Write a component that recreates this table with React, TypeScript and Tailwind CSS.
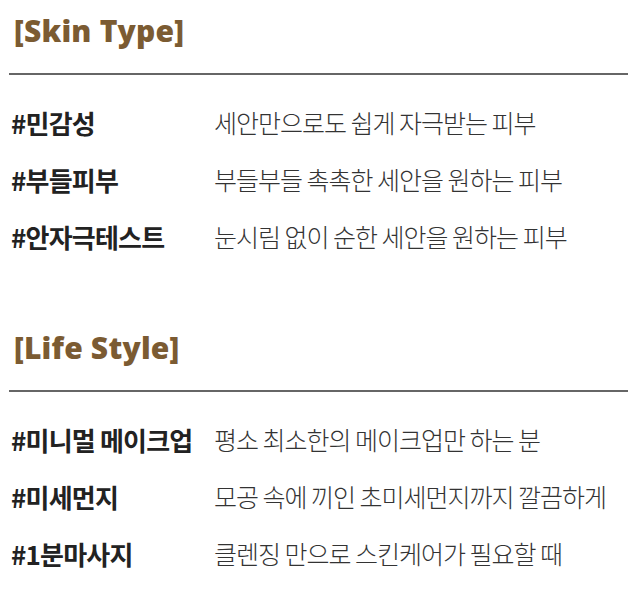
const sections = [
  {
    title: "[Skin Type]",
    rows: [
      ["#민감성", "세안만으로도 쉽게 자극받는 피부"],
      ["#부들피부", "부들부들 촉촉한 세안을 원하는 피부"],
      ["#안자극테스트", "눈시림 없이 순한 세안을 원하는 피부"],
    ],
  },
  {
    title: "[Life Style]",
    rows: [
      ["#미니멀 메이크업", "평소 최소한의 메이크업만 하는 분"],
      ["#미세먼지", "모공 속에 끼인 초미세먼지까지 깔끔하게"],
      ["#1분마사지", "클렌징 만으로 스킨케어가 필요할 때"],
    ],
  },
];

export default function App() {
  return (
    <div
      className="w-[632px] h-[593px] bg-white overflow-hidden pt-[10px]"
      style={{ fontFamily: '"Noto Sans CJK KR", "Noto Sans", sans-serif' }}
    >
      {sections.map((s, i) => (
        <div key={s.title} className={i > 0 ? "mt-[62px]" : ""}>
          <h2
            className="h-[40px] pl-[14px] flex items-center text-[30px] font-extrabold tracking-[0.2px] text-[#7b5b32]"
            style={{ fontFamily: '"Open Sans", "Noto Sans", sans-serif' }}
          >
            {s.title}
          </h2>
          <div className="mt-[23px] ml-[9px] mr-[4px] h-[2px] bg-[#666666]" />
          <div className="mt-[19px]">
            {s.rows.map(([tag, desc]) => (
              <div key={tag} className="h-[57px] flex items-center">
                <span className="w-[214px] pl-[11px] shrink-0 text-[26px] font-bold tracking-[-0.8px] text-[#222222]">
                  {tag}
                </span>
                <span className="text-[25px] font-light tracking-[-1px] text-[#333333]">
                  {desc}
                </span>
              </div>
            ))}
          </div>
        </div>
      ))}
    </div>
  );
}
